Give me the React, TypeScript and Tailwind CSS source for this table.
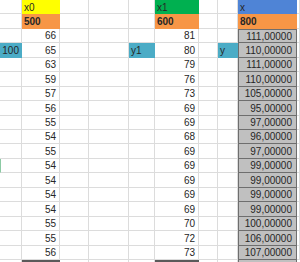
import React from "react";
import clsx from "clsx";

type Cell = {
  text?: string;
  kind?: "yellow" | "green" | "blue" | "orange" | "teal" | "gray" | "num" | "mark";
  align?: "left" | "right";
  bold?: boolean;
};

const colB = ["66", "65", "63", "59", "57", "56", "55", "54", "55", "54", "54", "54", "54", "55", "55", "56"];
const colF = ["81", "80", "79", "76", "73", "69", "69", "68", "69", "69", "69", "69", "69", "70", "72", "73"];
const colI = [
  "111,00000", "110,00000", "111,00000", "110,00000", "105,00000", "95,00000", "97,00000", "96,00000",
  "97,00000", "99,00000", "99,00000", "99,00000", "99,00000", "100,00000", "106,00000", "107,00000",
];

function buildRows(): Cell[][] {
  const rows: Cell[][] = [];
  rows.push([
    {}, { text: "x0", kind: "yellow" }, {}, {}, {}, { text: "x1", kind: "green" }, {}, {}, { text: "x", kind: "blue" }, {},
  ]);
  rows.push([
    {}, { text: "500", kind: "orange", bold: true }, {}, {}, {}, { text: "600", kind: "orange", bold: true }, {}, {},
    { text: "800", kind: "orange", bold: true }, {},
  ]);
  colB.forEach((b, i) => {
    const isLabel = i === 1;
    rows.push([
      isLabel ? { text: "100", kind: "teal", align: "right" } : i === 9 ? { kind: "mark" } : {},
      { text: b, kind: "num", align: "right" },
      {},
      {},
      isLabel ? { text: "y1", kind: "teal" } : {},
      { text: colF[i], kind: "num", align: "right" },
      {},
      isLabel ? { text: "y", kind: "teal" } : {},
      { text: colI[i], kind: "gray", align: "right" },
      {},
    ]);
  });
  return rows;
}

const cellClass = (c: Cell, first: boolean) =>
  clsx(
    "flex items-center overflow-hidden whitespace-nowrap",
    c.align === "right" ? "justify-end pr-[3px]" : "justify-start pl-[2px]",
    c.bold && "font-bold",
    (!c.kind || c.kind === "num") && "border-r border-b border-[#dcdcdc] bg-white",
    c.kind === "mark" && "border-r border-b border-[#dcdcdc] border-l border-l-[#8ccaa4]",
    c.kind === "yellow" && "bg-[#ffff00]",
    c.kind === "green" && "bg-[#00b050]",
    c.kind === "blue" && "bg-[#4f84d6]",
    c.kind === "orange" && "bg-[#f79646]",
    c.kind === "teal" && "bg-[#4bacc6]",
    c.kind === "gray" && "bg-[#c0c0c0] border-x border-b border-[#6e6e6e] pr-[4px]",
    c.kind === "gray" && first && "border-t"
  );

export default function App() {
  const rows = buildRows();
  return (
    <div className="w-[300px] h-[262px] overflow-hidden bg-white text-[10px] text-[#262626] font-['Liberation_Sans',Arial,sans-serif]">
      <div className="grid grid-cols-[22px_38px_29px_40px_26px_44px_19px_20px_59px_3px] grid-rows-[14px_15px_14px_15px_14px_15px_14px_15px_14px_14px_15px_14px_15px_14px_15px_14px_15px_14px_2px]">
        {rows.map((row, r) =>
          row.map((c, ci) => (
            <div key={`${r}_${ci}`} className={cellClass(c, r === 2)}>
              {c.text}
            </div>
          ))
        )}
        {/* top edge of the next row */}
        <div className="border-r border-[#dcdcdc]" />
        <div className="bg-[#5a5a5a]" />
        <div className="border-r border-[#dcdcdc]" />
        <div className="border-r border-[#dcdcdc]" />
        <div className="border-r border-[#dcdcdc]" />
        <div className="bg-[#5a5a5a]" />
        <div className="border-r border-[#dcdcdc]" />
        <div className="border-r border-[#dcdcdc]" />
        <div className="bg-[#c0c0c0] border-x border-[#6e6e6e]" />
        <div />
      </div>
    </div>
  );
}
